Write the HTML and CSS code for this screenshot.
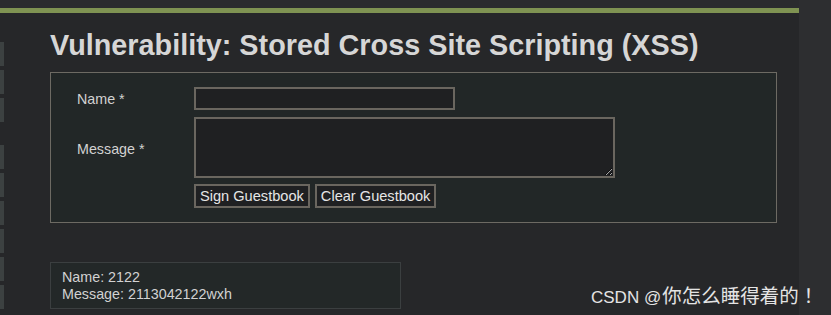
FILE: index.html
```html
<!DOCTYPE html>
<html>
<head>
<meta charset="utf-8">
<link rel="stylesheet" href="styles.css">
</head>
<body>
<div class="page">
  <div class="main">
    <div class="topgap"></div>
    <div class="greenbar"></div>
    <div class="body-row">
      <div class="sidebar">
        <div class="group">
          <span class="tab"></span><span class="tab"></span><span class="tab"></span>
        </div>
        <div class="group">
          <span class="tab"></span><span class="tab"></span><span class="tab"></span>
          <span class="tab"></span><span class="tab"></span><span class="tab"></span>
        </div>
      </div>
      <div class="content">
        <h1 class="title">Vulnerability: Stored Cross Site Scripting (XSS)</h1>
        <div class="formbox">
          <div class="row">
            <label class="label name">Name *</label>
            <input class="txt" type="text">
          </div>
          <div class="row">
            <label class="label msg">Message *</label>
            <textarea class="area"></textarea>
          </div>
          <div class="row">
            <span class="label"></span>
            <div class="buttons">
              <button class="btn">Sign Guestbook</button>
              <button class="btn">Clear Guestbook</button>
            </div>
          </div>
        </div>
        <div class="entry">
          <div>Name: 2122</div>
          <div>Message: 2113042122wxh</div>
        </div>
      </div>
    </div>
  </div>
  <div class="rightstrip"></div>
  <div class="watermark">CSDN @<span class="cjk">你怎么睡得着的</span><span class="bang">！</span></div>
</div>
</body>
</html>
```
FILE: styles.css
```css
html, body {
  margin: 0;
  padding: 0;
  width: 831px;
  height: 315px;
  overflow: hidden;
  background: #262729;
  font-family: "Liberation Sans", Arial, sans-serif;
}
.page {
  display: flex;
  height: 315px;
  position: relative;
}
.main {
  width: 799px;
  background: #262729;
  display: flex;
  flex-direction: column;
}
.topgap {
  height: 8px;
  background: #2b2c2e;
}
.greenbar {
  height: 5px;
  background: #7f9352;
}
.body-row {
  display: flex;
}
.sidebar {
  width: 4px;
  display: flex;
  flex-direction: column;
  padding-top: 29px;
  gap: 23px;
}
.group {
  display: flex;
  flex-direction: column;
  gap: 4px;
}
.tab {
  display: block;
  width: 4px;
  height: 24px;
  background: #3c4141;
}
.content {
  padding-left: 46px;
  color: #d4d4d4;
}
.title {
  margin: 15px 0 0 0;
  font-size: 28.8px;
  font-weight: bold;
  line-height: 34px;
  color: #d6d6d6;
}
.formbox {
  margin-top: 10px;
  width: 727px;
  height: 151px;
  border: 1px solid #6d6a63;
  background: #222727;
  padding-top: 14px;
  box-sizing: border-box;
  display: flex;
  flex-direction: column;
  gap: 6px;
}
.row {
  display: flex;
  align-items: flex-start;
}
.label {
  width: 117px;
  padding-left: 26px;
  font-size: 14.3px;
  line-height: 23px;
  color: #d2d2d2;
  flex: none;
}
.label.name {
  padding-top: 1px;
}
.label.msg {
  padding-top: 21px;
}
.txt {
  margin: 0;
  width: 261px;
  height: 23px;
  box-sizing: border-box;
  border: 2px solid #6a665f;
  background: #1f2022;
  outline: none;
}
.area {
  margin: 0;
  width: 421px;
  height: 61px;
  box-sizing: border-box;
  border: 2px solid #6a665f;
  background: #1f2022;
  resize: both;
  outline: none;
}
.buttons {
  display: flex;
  gap: 5px;
}
.btn {
  margin: 0;
  height: 24px;
  padding: 0 4px;
  border: 2px solid #6a665f;
  background: #1f2022;
  color: #e6e6e6;
  font-family: "Liberation Sans", Arial, sans-serif;
  font-size: 14.6px;
  line-height: 18px;
}
.entry {
  margin-top: 39px;
  width: 351px;
  box-sizing: border-box;
  border: 1px solid #3b3f40;
  background: #232828;
  padding: 6px 11px 5px;
  font-size: 14.3px;
  line-height: 17px;
  color: #d2d2d2;
}
.rightstrip {
  flex: 1;
  background: #2d2e30;
}
.watermark {
  position: absolute;
  left: 591px;
  top: 284px;
  font-family: "Liberation Sans", "Noto Sans CJK SC", sans-serif;
  font-size: 17px;
  line-height: 22px;
  color: #e4e4e4;
  white-space: nowrap;
}
.cjk {
  margin-left: 1px;
  font-family: "Noto Sans CJK SC", sans-serif;
  font-size: 19.5px;
}
.bang {
  font-family: "Noto Sans CJK TC", sans-serif;
  font-size: 19.5px;
}
```
